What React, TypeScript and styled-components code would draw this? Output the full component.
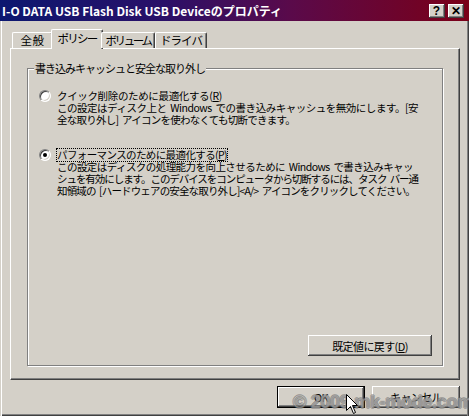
import React, { useLayoutEffect, useRef, useState } from "react";
import styled, { createGlobalStyle, css } from "styled-components";

const FACE = "#d4d0c8";
const SHADOW = "#808080";
const DARK = "#404040";
const UIFONT = `"Noto Sans CJK JP", "Noto Sans", sans-serif`;

const Global = createGlobalStyle`
  html, body { margin: 0; padding: 0; background: ${FACE}; }
  body { font-family: ${UIFONT}; }
  #root { width: 469px; height: 416px; }
`;

const Window = styled.div`
  position: relative;
  width: 469px;
  height: 416px;
  box-sizing: border-box;
  overflow: hidden;
  background: ${FACE};
  display: flex;
  flex-direction: column;
  box-shadow: inset 1px 0 0 ${FACE}, inset 2px 0 0 #fff, inset -1px 0 0 ${DARK},
    inset -2px 0 0 ${SHADOW}, inset 0 -1px 0 ${DARK}, inset 0 -2px 0 ${SHADOW};
`;

const TitleBar = styled.div`
  flex-shrink: 0;
  height: 21px;
  display: flex;
  align-items: center;
  padding: 0 5px 0 2px;
  background: linear-gradient(to right, #0c1870 0%, #2a1068 35%, #5a0a4a 62%, #7a0018 100%);
`;

const Title = styled.div`
  flex: 1;
  color: #fff;
  font-family: "Noto Sans CJK JP", "Liberation Sans", sans-serif;
  font-weight: 700;
  font-size: 12px;
  line-height: 21px;
  white-space: nowrap;
`;

const CaptionButtons = styled.div`
  display: flex;
  gap: 3px;
  margin-top: 1px;
`;

const CaptionButton = styled.div`
  width: 16px;
  height: 14px;
  box-sizing: border-box;
  background: ${FACE};
  box-shadow: inset -1px -1px 0 ${DARK}, inset 1px 1px 0 #fff, inset -2px -2px 0 ${SHADOW};
  display: flex;
  align-items: center;
  justify-content: center;
  padding: 0 1px 1px 0;
  color: #000;
  font-family: "Liberation Sans", sans-serif;
  font-weight: 700;
  font-size: 12px;
  line-height: 12px;
`;

const Body = styled.div`
  flex: 1;
  display: flex;
  flex-direction: column;
  padding: 8px 9px 0 10px;
`;

const TabStrip = styled.div`
  height: 19px;
  display: flex;
  align-items: flex-end;
  padding-left: 2px;
  position: relative;
  z-index: 1;
`;

const Tab = styled.div<{ $w: number; $active?: boolean }>`
  width: ${(p) => p.$w}px;
  height: 16px;
  box-sizing: border-box;
  background: ${FACE};
  border-top: 1px solid #fff;
  border-left: 1px solid #fff;
  border-right: 1px solid ${DARK};
  border-top-left-radius: 2px;
  border-top-right-radius: 2px;
  box-shadow: inset -1px 0 0 ${SHADOW};
  display: flex;
  justify-content: center;
  padding-top: 1px;
  color: #000;
  ${(p) =>
    p.$active &&
    css`
      height: 20px;
      margin: 0 -2px -1px;
      width: ${p.$w + 4}px;
      padding-top: 2px;
    `}
`;

const TabLabel = styled.span`
  display: inline-block;
  font-size: 11.5px;
  line-height: 13px;
  white-space: nowrap;
`;

const Panel = styled.div`
  height: 332px;
  box-sizing: border-box;
  border-top: 1px solid #fff;
  border-left: 1px solid #fff;
  border-right: 1px solid ${DARK};
  border-bottom: 1px solid ${DARK};
  box-shadow: inset -1px -1px 0 ${SHADOW};
  padding: 19px 16px 13px 16px;
  display: flex;
  flex-direction: column;
`;

const Group = styled.section`
  flex: 1;
  border: 1px solid ${SHADOW};
  box-shadow: inset 1px 1px 0 #fff, 1px 1px 0 #fff;
  display: flex;
  flex-direction: column;
  padding: 0 10px 9px 11px;
`;

const Legend = styled.div`
  align-self: flex-start;
  width: max-content;
  margin: -7px 0 0 -5px;
  padding: 0 1px;
  height: 12px;
  background: ${FACE};
  font-size: 11px;
  line-height: 12px;
  white-space: nowrap;
  color: #000;
`;

const Options = styled.div`
  display: flex;
  flex-direction: column;
  gap: 23px;
  margin-top: 16px;
`;

const Option = styled.div`
  display: grid;
  grid-template-columns: 12px 1fr;
  column-gap: 6px;
`;

const Radio = styled.span<{ $checked?: boolean }>`
  position: relative;
  width: 12px;
  height: 12px;
  box-sizing: border-box;
  border-radius: 50%;
  background: #fff;
  border: 1px solid;
  border-color: ${SHADOW} #fff #fff ${SHADOW};
  box-shadow: inset 1px 1px 0 ${DARK}, inset -1px -1px 0 ${FACE};
  ${(p) =>
    p.$checked &&
    css`
      &::after {
        content: "";
        position: absolute;
        left: 3px;
        top: 3px;
        width: 4px;
        height: 4px;
        border-radius: 50%;
        background: #000;
      }
    `}
`;

const TextCol = styled.div`
  display: flex;
  flex-direction: column;
  align-items: flex-start;
`;

const Label = styled.span<{ $focus?: boolean }>`
  display: block;
  width: max-content;
  font-size: 10.5px;
  line-height: 12px;
  height: 12px;
  white-space: nowrap;
  color: #000;
  ${(p) =>
    p.$focus &&
    css`
      outline: 1px dotted #000;
      outline-offset: 0px;
    `}
`;

const Line = styled.span`
  display: block;
  width: max-content;
  font-size: 10.5px;
  line-height: 12px;
  word-spacing: 2px;
  white-space: nowrap;
  color: #000;
`;

const U = styled.span`
  text-decoration: underline;
  text-underline-offset: 1px;
`;

const Button = styled.div<{ $w: number; $h: number; $default?: boolean }>`
  width: ${(p) => p.$w}px;
  height: ${(p) => p.$h}px;
  box-sizing: border-box;
  background: ${FACE};
  display: flex;
  align-items: center;
  justify-content: center;
  font-size: 11px;
  letter-spacing: -0.6px;
  color: #000;
  white-space: nowrap;
  box-shadow: inset -1px -1px 0 ${DARK}, inset 1px 1px 0 #fff, inset -2px -2px 0 ${SHADOW};
  ${(p) =>
    p.$default &&
    css`
      border: 1px solid #000;
    `}
`;

const DefaultRow = styled.div`
  margin-top: auto;
  display: flex;
  justify-content: flex-end;
`;

const ButtonRow = styled.div`
  display: flex;
  justify-content: flex-end;
  gap: 7px;
  margin-top: 6px;
`;

const Watermark = styled.div`
  position: absolute;
  left: 293px;
  top: 392px;
  font-family: "Liberation Sans", "DejaVu Sans", sans-serif;
  font-weight: 700;
  font-size: 18px;
  letter-spacing: -0.3px;
  color: rgba(255, 255, 255, 0.3);
  text-shadow: -1px 0 0 rgba(100, 100, 100, 0.45), 1px 0 0 rgba(100, 100, 100, 0.45),
    0 -1px 0 rgba(100, 100, 100, 0.45), 0 1px 0 rgba(100, 100, 100, 0.45);
  white-space: nowrap;
  pointer-events: none;
`;

const Cursor = styled.svg`
  position: absolute;
  left: 346px;
  top: 394px;
`;

/* Fits a one-line text to the width it has in the original dialog by
   measuring it at run time and spreading the difference as letter spacing. */
function Fit({
  as: C,
  w,
  children,
  ...rest
}: {
  as: any;
  w: number;
  children: React.ReactNode;
  [k: string]: any;
}) {
  const ref = useRef<HTMLElement>(null);
  const [ls, setLs] = useState<number | undefined>(undefined);
  useLayoutEffect(() => {
    const el = ref.current;
    if (!el) return;
    const prev = el.style.letterSpacing;
    el.style.letterSpacing = "0px";
    const natural = el.getBoundingClientRect().width;
    el.style.letterSpacing = prev;
    const n = (el.textContent || "").length || 1;
    setLs((w - natural) / n);
  }, [w]);
  return (
    <C ref={ref} style={ls === undefined ? undefined : { letterSpacing: `${ls}px` }} {...rest}>
      {children}
    </C>
  );
}

export default function App() {
  return (
    <>
      <Global />
      <Window>
        <TitleBar>
          <Title>I-O DATA USB Flash Disk USB Deviceのプロパティ</Title>
          <CaptionButtons>
            <CaptionButton>?</CaptionButton>
            <CaptionButton>✕</CaptionButton>
          </CaptionButtons>
        </TitleBar>
        <Body>
          <TabStrip>
            <Tab $w={41}>
              <Fit as={TabLabel} w={24}>全般</Fit>
            </Tab>
            <Tab $w={48} $active>
              <Fit as={TabLabel} w={39}>ポリシー</Fit>
            </Tab>
            <Tab $w={54}>
              <Fit as={TabLabel} w={45}>ボリューム</Fit>
            </Tab>
            <Tab $w={52}>
              <Fit as={TabLabel} w={42}>ドライバ</Fit>
            </Tab>
          </TabStrip>
          <Panel>
            <Group>
              <Fit as={Legend} w={172}>
                書き込みキャッシュと安全な取り外し
              </Fit>
              <Options>
                <Option>
                  <Radio />
                  <TextCol>
                    <Fit as={Label} w={165}>
                      クイック削除のために最適化する(<U>R</U>)
                    </Fit>
                    <Fit as={Line} w={361}>
                      この設定はディスク上と Windows での書き込みキャッシュを無効にします。[安
                    </Fit>
                    <Fit as={Line} w={238}>
                      全な取り外し] アイコンを使わなくても切断できます。
                    </Fit>
                  </TextCol>
                </Option>
                <Option>
                  <Radio $checked />
                  <TextCol>
                    <Fit as={Label} w={170} $focus>
                      パフォーマンスのために最適化する(<U>P</U>)
                    </Fit>
                    <Fit as={Line} w={356}>
                      この設定はディスクの処理能力を向上させるために Windows で書き込みキャッ
                    </Fit>
                    <Fit as={Line} w={361}>
                      シュを有効にします。このデバイスをコンピュータから切断するには、タスク バー通
                    </Fit>
                    <Fit as={Line} w={358}>
                      知領域の [ハードウェアの安全な取り外し]&lt;A/&gt; アイコンをクリックしてください。
                    </Fit>
                  </TextCol>
                </Option>
              </Options>
              <DefaultRow>
                <Button $w={124} $h={21}>
                  既定値に戻す(<U>D</U>)
                </Button>
              </DefaultRow>
            </Group>
          </Panel>
          <ButtonRow>
            <Button $w={88} $h={22} $default>
              OK
            </Button>
            <Button $w={88} $h={22}>
              キャンセル
            </Button>
          </ButtonRow>
        </Body>
        <Watermark>© 2009 mk-mode.com</Watermark>
        <Cursor width="13" height="22" viewBox="0 0 13 22">
          <path
            d="M0.5 0.5 L0.5 16.5 L4.5 12.5 L7.5 19.5 L9.5 18.5 L6.5 11.5 L11.5 11.5 Z"
            fill="#fff"
            stroke="#000"
            strokeWidth="1"
          />
        </Cursor>
      </Window>
    </>
  );
}
